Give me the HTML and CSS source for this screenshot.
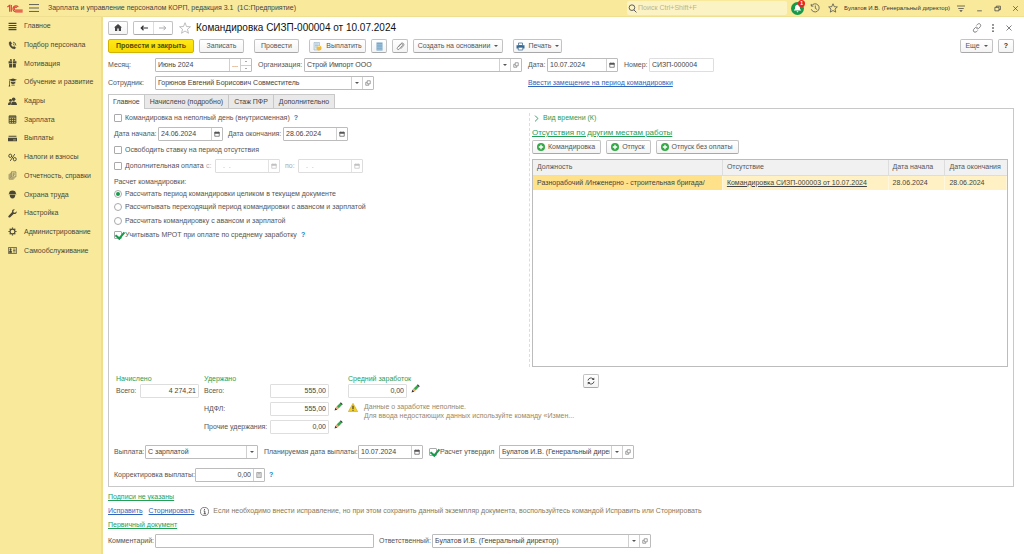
FILE: index.html
```
<!DOCTYPE html>
<html lang="ru">
<head>
<meta charset="utf-8">
<title>Командировка СИЗП-000004 от 10.07.2024</title>
<link rel="stylesheet" href="styles.css">
</head>
<body>
<svg class="sprite" aria-hidden="true">
  <symbol id="calendar" viewBox="0 0 12 12"><path d="M1.5 2.5h9v8h-9z" fill="none" stroke="#555" stroke-width="1.4"/><path d="M1 2h10v3.5H1zM3 .8h1.4V3H3zM7.6.8H9V3H7.6z" fill="#555"/></symbol>
  <symbol id="open" viewBox="0 0 12 12"><path d="M4.5 1.5h6v6h-6zM4 4.500H1.500v6h6V8" fill="none" stroke="#666" stroke-width="1.2"/></symbol>
  <symbol id="plus" viewBox="0 0 12 12"><circle cx="6" cy="6" r="6" fill="#35a847"/><path d="M6 2.700v6.600M2.700 6h6.600" stroke="#fff" stroke-width="2"/></symbol>
  <symbol id="pencil" viewBox="0 0 16 16"><path d="M1 15l1.500-5 3.500 3.500z" fill="#333"/><path d="M2.500 10L5 7.500 8.500 11 6 13.500z" fill="#f0a265"/><path d="M5 7.500L10.500 2 14 5.500 8.500 11z" fill="#35a84b"/><path d="M10.500 2L12 .5 15.500 4 14 5.500z" fill="#333"/></symbol>
  <symbol id="calc" viewBox="0 0 12 12"><path d="M1.500 1h9v10h-9z" fill="none" stroke="#777" stroke-width="1.200"/><path d="M3 3.500h6M3 6h1.500M5.300 6h1.500M7.600 6H9M3 8.500h1.500M5.300 8.500h1.500M7.600 8.500H9" stroke="#777" stroke-width="1.400"/></symbol>
</svg>

<header class="topbar">
  <svg class="logo" viewBox="0 0 48 27" fill="none" stroke="#e0403a" stroke-width="3.500"><path d="M1 9l7-5v19M13 23V3"/><path d="M34 9a9 9 0 1 0-8 14.500h21"/><path d="M29.500 11a4.500 4.500 0 1 0-3.500 7.500h21"/></svg>
  <button class="plain burger" aria-label="Меню"><svg viewBox="0 0 16 16" stroke="#555" stroke-width="1.500"><path d="M0 2.500h16M0 8h16M0 13.500h16"/></svg></button>
  <span class="app-title">Зарплата и управление персоналом КОРП, редакция 3.1&nbsp; (1С:Предприятие)</span>
  <label class="search">
    <svg viewBox="0 0 16 16" fill="none" stroke="#444" stroke-width="1.500"><circle cx="7" cy="6.500" r="5"/><path d="M10.500 10.500L15 15"/></svg>
    <input type="search" aria-label="Поиск" placeholder="Поиск Ctrl+Shift+F">
  </label>
  <button class="plain bell" aria-label="Оповещения"><svg viewBox="0 0 24 24"><circle cx="12" cy="12" r="12" fill="#159a4b"/><path d="M12 5c-3.500 0-4.500 3-4.500 6 0 2-1 3-2.500 4.500h14C17.500 14 16.500 13 16.500 11c0-3-1-6-4.500-6zM10 17h4l-2 2.500z" fill="#fff"/></svg><span class="count">1</span></button>
  <button class="plain" aria-label="История"><svg viewBox="0 0 16 16" fill="none" stroke="#555" stroke-width="1.300"><path d="M2.500 4.500A6.500 6.500 0 1 1 2 10M2 1.500v3.500h3.500M8.500 4v4.500l3 2"/></svg></button>
  <button class="plain" aria-label="Избранное"><svg viewBox="0 0 16 16" fill="none" stroke="#555" stroke-width="1.300"><path d="M8 1.200l2 4.700 5 .4-3.800 3.300 1.200 5L8 12l-4.400 2.600 1.200-5L1 6.300l5-.4z"/></svg></button>
  <span class="user">Булатов И.В. (Генеральный директор)</span>
  <button class="plain tune" aria-label="Настройки"><svg viewBox="0 0 16 16" stroke="#444" stroke-width="1.500"><path d="M0 3h16M2.500 8h11"/><path d="M4.500 11.500h7l-3.500 3.500z" fill="#444" stroke="none"/></svg></button>
  <button class="plain win" aria-label="Свернуть"><svg viewBox="0 0 12 12" stroke="#444" stroke-width="1.300"><path d="M2 10h8"/></svg></button>
  <button class="plain win" aria-label="Развернуть"><svg viewBox="0 0 12 12" fill="none" stroke="#444" stroke-width="1.300"><path d="M1.500 4h7v6h-7zM4 4V2h7v6H8.500"/></svg></button>
  <button class="plain win" aria-label="Закрыть"><svg viewBox="0 0 12 12" stroke="#444" stroke-width="1.200"><path d="M2 2l8 8M10 2l-8 8"/></svg></button>
</header>

<div class="shell">
<nav class="side">
 <div class="menu">
  <a href="#"><svg viewBox="0 0 16 16" stroke="#4b4737" stroke-width="2"><path d="M1 2.500h14M1 6.200h14M1 9.900h14M1 13.600h14"/></svg>Главное</a>
  <a href="#"><svg viewBox="0 0 16 16" fill="none" stroke="#4b4737" stroke-width="1.500"><path d="M2 2c-1 6 4 12 10 12l2-2-3-2.500-2 1C7 9.500 5.500 7.500 5.500 6L7 4.500 4.500 1z" fill="#4b4737" stroke-width=".5"/><path d="M9 5a3 3 0 0 1 2 3M9 2a6 6 0 0 1 5 6"/></svg>Подбор персонала</a>
  <a href="#"><svg viewBox="0 0 16 16" fill="#4b4737"><path d="M1 4h6.300v4H1zM8.700 4H15v4H8.700zM2 9h5.300v6H2zM8.700 9H14v6H8.700zM4 0l3 1v2H3zM12 0L9 1v2h4z"/></svg>Мотивация</a>
  <a href="#"><svg viewBox="0 0 16 16" fill="#4b4737"><path d="M1 3l8-2 7 2-7 3zM5 6l4 1.500L13 6v3.500L9 11 5 9.500zM2 4.500h1.300V12l.7 3H1l1-3zM6 12h6v1.500H6z"/></svg>Обучение и развитие</a>
  <a href="#"><svg viewBox="0 0 16 16" fill="#4b4737"><circle cx="10" cy="4" r="3.200"/><circle cx="4.500" cy="6" r="2.500"/><path d="M5.500 14c0-4 1.500-6 4.500-6s6 2 6 6zM0 14c0-3 1-5 4.500-5L5.500 10l-1 4z"/></svg>Кадры</a>
  <a href="#"><svg viewBox="0 0 16 16" fill="none" stroke="#4b4737" stroke-width="1.600"><path d="M2 1.500h12v13H2zM2 5h12M2 8.200h12M2 11.400h12M6 5v9.500M10 5v9.500M2 3h12"/></svg>Зарплата</a>
  <a href="#"><svg viewBox="0 0 16 16" fill="#4b4737"><path d="M1 3h14v2H1zM0 6.500h16V13H0z"/><path d="M9 10.500h5" stroke="#f9ea9b"/></svg>Выплаты</a>
  <a href="#"><svg viewBox="0 0 16 16" fill="none" stroke="#4b4737" stroke-width="1.700"><ellipse cx="4" cy="5" rx="2.600" ry="3"/><ellipse cx="12" cy="11" rx="2.600" ry="3"/><path d="M12 2L4 14"/></svg>Налоги и взносы</a>
  <a href="#"><svg viewBox="0 0 16 16" fill="none" stroke="#6b664f" stroke-width="1.200"><path d="M6 1.500h8v9H6zM4 3.500v9h8M2 5.500v9h8M8 4h4M8 6h4M8 8h3"/></svg>Отчетность, справки</a>
  <a href="#"><svg viewBox="0 0 16 16" fill="#4b4737"><path d="M2 6c0-3 2-5 6-5s6 2 6 5l1.500 1.500H.5zM3 8.500h10c0 4-2 6.500-5 6.500s-5-2.500-5-6.500z"/></svg>Охрана труда</a>
  <a href="#"><svg viewBox="0 0 16 16" fill="#4b4737"><path d="M15.500 4l-3 2.500L10 6l-.5-2.500L12 .8C9 0 6.500 2.500 7.300 5.500L.8 12.300c-1 1.500 1 3.700 2.700 2.700L10 8.800c3 .8 6-1.500 5.500-4.800z"/></svg>Настройка</a>
  <a href="#"><svg viewBox="0 0 16 16" fill="none" stroke="#4b4737"><circle cx="8" cy="8" r="4.300" stroke-width="2"/><path d="M8 .8v2.500M8 12.700v2.500M.8 8h2.500M12.700 8h2.500M3 3l1.600 1.600M11.400 11.400L13 13M13 3l-1.600 1.600M4.600 11.400L3 13" stroke-width="2.200"/></svg>Администрирование</a>
  <a href="#"><svg viewBox="0 0 16 16" fill="none" stroke="#4b4737" stroke-width="1.300"><path d="M.7 2.700h14.600v10.600H.7z"/><path d="M2.500 11.500c0-3 1-3.500 2-3.500s2 .5 2 3.500zM3.500 5h2v2h-2z" fill="#4b4737"/><path d="M9 5.500h4.500M9 8h4.500M9 10.500h4.500"/></svg>Самообслуживание</a>
 </div>
</nav>

<main class="doc">
  <div class="head">
    <button class="btn home" aria-label="Начальная страница"><svg viewBox="0 0 16 14" fill="#444"><path d="M8 0l8 7h-2v7H9.500V9h-3v5H2V7H0z"/></svg></button>
    <div class="nav-pair"><button aria-label="Назад"><svg viewBox="0 0 16 12" fill="none" stroke="#333" stroke-width="2.400"><path d="M16 6H3M7 1.500L2.500 6 7 10.500"/></svg></button><button aria-label="Вперед"><svg viewBox="0 0 16 12" fill="none" stroke="#aaa" stroke-width="2"><path d="M0 6h13M9 1.500L13.500 6 9 10.500"/></svg></button></div>
    <button class="plain fav" aria-label="В избранное"><svg viewBox="0 0 16 16" fill="none" stroke="#aaa"><path d="M8 1l2 5 5.300.3-4 3.400 1.300 5.300L8 12l-4.600 3 1.300-5.300-4-3.400L6 6z"/></svg></button>
    <h1>Командировка СИЗП-000004 от 10.07.2024</h1>
    <div class="head-tools">
      <button class="plain" aria-label="Ссылка"><svg viewBox="0 0 16 16" fill="none" stroke="#777" stroke-width="1.500"><path d="M7 4l2-2c3-2.500 6 .5 4.500 3.500L11 8.500c-1 1-3 1-4 0M9 12l-2 2c-3 2-6-.5-4.500-3.500L5 7.500c1-1 3-1 4 0"/></svg></button>
      <button class="plain" aria-label="Дополнительно"><svg viewBox="0 0 16 16" fill="#666"><circle cx="8" cy="3" r="1.500"/><circle cx="8" cy="8" r="1.500"/><circle cx="8" cy="13" r="1.500"/></svg></button>
      <button class="plain" aria-label="Закрыть документ"><svg viewBox="0 0 16 16" stroke="#777" stroke-width="1.500"><path d="M4 4l8 8M12 4l-8 8"/></svg></button>
    </div>
  </div>

  <div class="toolbar">
    <button class="btn primary">Провести и закрыть</button>
    <button class="btn save">Записать</button>
    <button class="btn post">Провести</button>
    <button class="btn pay"><svg viewBox="0 0 18 18"><path d="M2 1h11v15H2z" fill="#dceaf4" stroke="#8aa5ba"/><path d="M4 4h7M4 7h7M4 10h4" stroke="#8aa5ba"/><circle cx="12" cy="12" r="5" fill="#efb93d"/><path d="M9 9h5" stroke="#fff4b0" stroke-width="1.500"/></svg>Выплатить</button>
    <button class="btn square" aria-label="Движения документа"><svg viewBox="0 0 18 18"><path d="M3 1h12v16H3z" fill="#6fa0c4"/><path d="M3 4.500h12M3 8h12M3 11.500h12M3 14.500h12" stroke="#d5e5f0"/></svg></button>
    <button class="btn square" aria-label="Присоединенные файлы"><svg viewBox="0 0 16 16" fill="none" stroke="#777" stroke-width="1.400"><path d="M4 9l5-5.500c2-1.500 4 .5 2.500 2.500l-6 7c-2 1.500-4.500-.5-3-3l6-7c3-3 7 0 5 3.500L8.500 12"/></svg></button>
    <button class="btn create">Создать на основании<i class="caret"></i></button>
    <button class="btn print"><svg viewBox="0 0 18 16"><path d="M5 1h8v5H5z" fill="#fff" stroke="#396a90" stroke-width="1.500"/><path d="M1 5.500h16V12H1z" fill="#396a90"/><path d="M4.500 9.500h9V15h-9z" fill="#fff" stroke="#396a90" stroke-width="1.500"/></svg>Печать<i class="caret"></i></button>
    <button class="btn more">Еще<i class="caret"></i></button>
    <button class="btn square help">?</button>
  </div>

  <div class="row-main">
    <label for="month">Месяц:</label>
    <div class="field"><input id="month" value="Июнь 2024"><button aria-label="Выбрать месяц">...</button><span class="spin"><button aria-label="Следующий месяц"><i class="up"></i></button><button aria-label="Предыдущий месяц"><i class="caret"></i></button></span></div>
    <label for="org">Организация:</label>
    <div class="field"><span class="pick"><select id="org"><option>Строй Импорт ООО</option></select><i class="caret"></i></span><button aria-label="Открыть организацию"><svg><use href="#open"/></svg></button></div>
    <label for="date">Дата:</label>
    <div class="field"><input id="date" value="10.07.2024"><button aria-label="Календарь"><svg><use href="#calendar"/></svg></button></div>
    <label for="num">Номер:</label>
    <div class="field soft"><input id="num" value="СИЗП-000004"></div>
  </div>
  <div class="row-person">
    <label for="person">Сотрудник:</label>
    <div class="field"><span class="pick"><select id="person"><option>Горюнов Евгений Борисович Совместитель</option></select><i class="caret"></i></span><button aria-label="Открыть сотрудника"><svg><use href="#open"/></svg></button></div>
    <a class="blue" href="#">Ввести замещение на период командировки</a>
  </div>

  <div class="tabs" role="tablist">
    <button role="tab" aria-selected="true">Главное</button>
    <button role="tab" aria-selected="false">Начислено (подробно)</button>
    <button role="tab" aria-selected="false">Стаж ПФР</button>
    <button role="tab" aria-selected="false">Дополнительно</button>
  </div>

  <section class="panel">
    <div class="columns">
      <div class="left">
        <div class="line"><label class="tick"><input type="checkbox">Командировка на неполный день (внутрисменная)</label><a class="q" href="#">?</a></div>
        <div class="line dates">
          <label for="from">Дата начала:</label>
          <div class="field date"><input id="from" value="24.06.2024"><button aria-label="Календарь"><svg><use href="#calendar"/></svg></button></div>
          <label for="to">Дата окончания:</label>
          <div class="field date"><input id="to" value="28.06.2024"><button aria-label="Календарь"><svg><use href="#calendar"/></svg></button></div>
        </div>
        <div class="line"><label class="tick"><input type="checkbox">Освободить ставку на период отсутствия</label></div>
        <div class="line extra">
          <label class="tick"><input type="checkbox">Дополнительная оплата</label>
          <label class="dim" for="xfrom">с:</label>
          <div class="field date off"><input id="xfrom" value=" .  ." disabled><button disabled aria-label="Календарь"><svg><use href="#calendar"/></svg></button></div>
          <label class="dim" for="xto">по:</label>
          <div class="field date off"><input id="xto" value=" .  ." disabled><button disabled aria-label="Календарь"><svg><use href="#calendar"/></svg></button></div>
        </div>
        <div class="modes" role="radiogroup" aria-labelledby="modes-title">
          <span id="modes-title">Расчет командировки:</span>
          <label class="tick"><input type="radio" name="mode" checked>Рассчитать период командировки целиком в текущем документе</label>
          <label class="tick"><input type="radio" name="mode">Рассчитывать переходящий период командировки с авансом и зарплатой</label>
          <label class="tick"><input type="radio" name="mode">Рассчитать командировку с авансом и зарплатой</label>
          <div class="line short"><label class="tick"><input type="checkbox" checked>Учитывать МРОТ при оплате по среднему заработку</label><a class="q" href="#">?</a></div>
        </div>
      </div>
      <div class="right">
        <button class="plain expander"><svg viewBox="0 0 8 12" fill="none" stroke="#229c55" stroke-width="1.600"><path d="M1.500 1L6.500 6l-5 5"/></svg>Вид времени (К)</button>
        <a class="group" href="#">Отсутствия по другим местам работы</a>
        <div class="adders">
          <button class="btn"><svg><use href="#plus"/></svg>Командировка</button>
          <button class="btn"><svg><use href="#plus"/></svg>Отпуск</button>
          <button class="btn"><svg><use href="#plus"/></svg>Отпуск без оплаты</button>
        </div>
        <div class="grid-box">
          <table>
            <colgroup><col class="c1"><col class="c2"><col class="c3"><col class="c4"></colgroup>
            <thead><tr><th>Должность</th><th>Отсутствие</th><th>Дата начала</th><th>Дата окончания</th></tr></thead>
            <tbody><tr><td class="current">Разнорабочий /Инженерно - строительная бригада/</td><td><a href="#">Командировка СИЗП-000003 от 10.07.2024</a></td><td>28.06.2024</td><td>28.06.2024</td></tr></tbody>
          </table>
        </div>
      </div>
    </div>

    <div class="totals">
      <div class="sum accrued">
        <h2>Начислено</h2>
        <label for="acc">Всего:</label><div class="field soft num"><input id="acc" value="4 274,21"></div>
      </div>
      <div class="sum held">
        <h2>Удержано</h2>
        <label for="held">Всего:</label><div class="field soft num"><input id="held" value="555,00"></div><span></span>
        <label for="tax">НДФЛ:</label><div class="field soft num"><input id="tax" value="555,00"></div><button class="plain pen" aria-label="Изменить НДФЛ"><svg><use href="#pencil"/></svg></button>
        <label for="other">Прочие удержания:</label><div class="field soft num"><input id="other" value="0,00"></div><button class="plain pen" aria-label="Изменить удержания"><svg><use href="#pencil"/></svg></button>
      </div>
      <div class="average">
        <h2><label for="avg">Средний заработок</label></h2>
        <div class="avg-row"><div class="field soft num"><input id="avg" value="0,00"></div><button class="plain pen" aria-label="Изменить заработок"><svg><use href="#pencil"/></svg></button></div>
        <div class="warn"><svg viewBox="0 0 18 16"><path d="M9 .5L17.500 15.500H.5z" fill="#f4cf27" stroke="#caa20c"/><path d="M9 5v5.500M9 12v2" stroke="#333" stroke-width="2"/></svg><p>Данные о заработке неполные.<br>Для ввода недостающих данных используйте команду «Измен...</p></div>
      </div>
      <button class="btn refresh" aria-label="Обновить"><svg viewBox="0 0 16 16" fill="none" stroke="#444" stroke-width="1.800"><path d="M2 7a6 6 0 0 1 10.500-3M14 9a6 6 0 0 1-10.500 3"/><path d="M14.500 1v5h-5zM1.500 15v-5h5z" fill="#444" stroke="none"/></svg></button>
    </div>

    <div class="row-pay">
      <label for="pay">Выплата:</label>
      <div class="field"><span class="pick"><select id="pay"><option>С зарплатой</option></select><i class="caret"></i></span></div>
      <label for="plan">Планируемая дата выплаты:</label>
      <div class="field"><input id="plan" value="10.07.2024"><button aria-label="Календарь"><svg><use href="#calendar"/></svg></button></div>
      <label class="tick"><input type="checkbox" checked>Расчет утвердил</label>
      <div class="field"><span class="pick"><select aria-label="Расчет утвердил"><option>Булатов И.В. (Генеральный директор)</option></select><i class="caret"></i></span><button aria-label="Открыть"><svg><use href="#open"/></svg></button></div>
    </div>
    <div class="row-fix">
      <label for="fix">Корректировка выплаты:</label>
      <div class="field num"><input id="fix" value="0,00"><button aria-label="Калькулятор"><svg><use href="#calc"/></svg></button></div>
      <a class="q" href="#">?</a>
    </div>
  </section>

  <footer class="foot">
    <a class="green" href="#">Подписи не указаны</a>
    <div class="hint"><a class="blue" href="#">Исправить</a><a class="blue" href="#">Сторнировать</a><svg viewBox="0 0 16 16" fill="none" stroke="#444"><circle cx="8" cy="8" r="7.200" stroke-width="1.200"/><path d="M6.500 7H8.500v5M6.500 12h4M8 3.500v1.800" stroke-width="1.600"/></svg><span>Если необходимо внести исправление, но при этом сохранить данный экземпляр документа, воспользуйтесь командой Исправить или Сторнировать</span></div>
    <a class="green" href="#">Первичный документ</a>
    <div class="row-foot">
      <label for="comment">Комментарий:</label>
      <div class="field"><input id="comment"></div>
      <label for="resp">Ответственный:</label>
      <div class="field"><span class="pick"><select id="resp"><option>Булатов И.В. (Генеральный директор)</option></select><i class="caret"></i></span><button aria-label="Открыть ответственного"><svg><use href="#open"/></svg></button></div>
    </div>
  </footer>
</main>
</div>
</body>
</html>
```

FILE: styles.css
```
* { box-sizing: border-box; }
body {
  margin: 0;
  min-height: 100vh;
  display: flex;
  flex-direction: column;
  font: 7px/10px "Liberation Sans", Arial, sans-serif;
  color: #555;
  background: #fff;
}
.sprite { display: none; }
button, input, select { font: inherit; color: inherit; margin: 0; }
button { padding: 0; cursor: pointer; }
svg { flex: none; display: block; }
h1, h2, p { margin: 0; font-weight: normal; }
label, a, h1, h2, span { white-space: nowrap; }
.plain { border: 0; background: none; display: flex; align-items: center; justify-content: center; }

/* top bar */
.topbar {
  display: flex;
  align-items: center;
  height: 17px;
  padding: 0 0 0 7px;
  background: #f9ea9b;
  border-bottom: 1px solid #eedf91;
}
.logo { width: 16px; height: 9px; }
.burger { margin-left: 6px; }
.burger svg { width: 9px; height: 8px; }
.app-title { margin-left: 10px; color: #444; }
.search {
  display: flex;
  align-items: center;
  width: 160px;
  height: 14px;
  margin-left: auto;
  padding-left: 1px;
  background: #fcf3c4;
  border-radius: 2px;
}
.search svg { width: 9px; height: 9px; }
.search input { flex: 1; min-width: 0; border: 0; background: none; padding: 0 1px; outline: 0; }
.search input::placeholder { color: #bdb38a; opacity: 1; }
.topbar .plain svg { width: 10px; height: 10px; }
.topbar .plain { width: 18px; height: 14px; }
.topbar .burger { width: 9px; }
.topbar .bell { position: relative; margin-left: 1px; }
.topbar .bell svg { width: 13px; height: 13px; }
.count {
  position: absolute;
  top: -1px;
  right: 1px;
  width: 7px;
  height: 7px;
  border-radius: 50%;
  background: #ee2020;
  color: #fff;
  font: bold 5px/7px "Liberation Sans", sans-serif;
  text-align: center;
}
.user { font-size: 6px; color: #333; margin: 0 2px; }
.topbar .tune svg { width: 8px; height: 9px; }
.topbar .win svg { width: 7px; height: 7px; }

/* side menu */
.shell { flex: 1; display: flex; }
.side { flex: none; width: 103px; padding-left: 8px; background: #f9ea9b; border-right: 2px solid #efdf8d; }
.menu { display: grid; grid-auto-rows: 1fr; height: 243px; }
.side a {
  display: flex;
  align-items: center;
  gap: 7px;
  color: #4b4737;
  text-decoration: none;
}
.side svg { width: 9px; height: 9px; }

/* document */
.doc { flex: 1; min-width: 0; display: flex; flex-direction: column; padding: 3px 10px 6px 5px; }
.btn {
  display: inline-flex;
  align-items: center;
  justify-content: center;
  height: 14px;
  padding: 0 6px;
  border: 1px solid #c3c3c3;
  border-bottom-color: #a8a8a8;
  border-radius: 2px;
  background: linear-gradient(#fff, #f4f4f4);
  white-space: nowrap;
}
.btn svg { width: 9px; height: 9px; margin-right: 4px; }
.caret {
  display: inline-block;
  border: 2px solid transparent;
  border-top-color: #555;
  border-bottom: 0;
}
.btn .caret { margin-left: 4px; }
.head { display: flex; align-items: center; height: 15px; }
.home { width: 20px; }
.btn.home svg { width: 8px; height: 7px; margin: 0; }
.nav-pair { display: flex; margin-left: 5px; border: 1px solid #c3c3c3; border-bottom-color: #a8a8a8; border-radius: 2px; }
.nav-pair button { display: flex; align-items: center; justify-content: center; width: 19px; height: 12px; border: 0; background: none; }
.nav-pair button + button { border-left: 1px solid #ddd; }
.nav-pair svg { width: 8px; height: 6px; }
.fav { margin-left: 6px; }
.fav svg { width: 12px; height: 12px; }
h1 { margin-left: 5px; font-size: 10px; line-height: 15px; color: #111; }
.head-tools { display: flex; gap: 6px; margin-left: auto; }
.head-tools svg { width: 10px; height: 10px; }
.toolbar { display: flex; margin-top: 4px; gap: 5px; }
.primary { width: 86px; font-weight: bold; color: #554b00; background: linear-gradient(#ffe817, #f7d900); border-color: #d1b400; }
.save { width: 45px; }
.post { width: 45px; margin-left: 5px; }
.pay { width: 57px; margin-left: 5px; }
.btn.square { width: 16px; padding: 0; }
.btn.square svg { margin: 0; }
.create { width: 90px; }
.print { width: 49px; margin-left: 5px; }
.more { width: 33px; margin-left: auto; }
.help { font-weight: bold; color: #333; }

/* fields */
.field {
  display: flex;
  height: 14px;
  min-width: 0;
  border: 1px solid #bcbcbc;
  border-radius: 1px;
  background: #fff;
  color: #444;
}
.field input, .field select {
  flex: 1;
  width: 100%;
  min-width: 0;
  padding: 0 2px;
  border: 0;
  outline: 0;
  background: none;
  appearance: none;
}
.field button {
  display: flex;
  align-items: center;
  justify-content: center;
  flex: none;
  width: 11px;
  border: 0;
  border-left: 1px solid #d0d0d0;
  background: none;
}
.field button svg { width: 6px; height: 6px; }
.pick { flex: 1; min-width: 0; display: grid; grid-template-columns: minmax(0, 1fr) 11px; }
.pick select { grid-area: 1 / 1 / 2 / 3; padding-right: 12px; }
.pick .caret { grid-area: 1 / 2; place-self: center; pointer-events: none; }
.pick::after { content: ""; grid-area: 1 / 2; border-left: 1px solid #d0d0d0; pointer-events: none; }
.spin { display: flex; flex-direction: column; width: 11px; border-left: 1px solid #d0d0d0; }
.field .spin button { flex: 1; width: 100%; border: 0; }
.field .spin button + button { border-top: 1px solid #d0d0d0; }
.spin .caret { border-width: 1px 1px 0; }
.up { border: 1px solid transparent; border-bottom-color: #555; border-top: 0; }
.soft { border-color: #dedede; }
.num input { text-align: right; }
.row-main, .row-person, .row-pay, .row-fix, .row-foot { display: grid; align-items: center; justify-content: start; }
.row-main { grid-template-columns: 47px 97px 52px 218px 25px 71px 31px 65px; margin-top: 5px; }
.row-main .field + label { margin-left: 6px; }
.row-person { grid-template-columns: 47px 219px auto; margin-top: 4px; }
.row-person a { margin-left: 154px; }
.blue { color: #3165bd; }
.green { color: #259e57; }

/* tabs */
.tabs { display: flex; margin-top: 4px; height: 15px; }
.tabs button { padding: 0 5px; border: 1px solid #c8c8c8; border-left: 0; background: #e9e9e9; color: #444; white-space: nowrap; }
.tabs button:first-child { padding: 0 4px; border-left: 1px solid #c8c8c8; }
.tabs button[aria-selected="true"] { background: #fff; border-bottom: 0; position: relative; z-index: 1; }
.panel {
  flex: 1;
  display: flex;
  flex-direction: column;
  margin-top: -1px;
  padding: 4px 5px;
  border: 1px solid #c8c8c8;
}
.columns { flex: 1; display: grid; grid-template-columns: 415fr 479fr; }
.line { display: flex; align-items: center; height: 16px; }
.line.short { height: 14px; }
.columns .left > .line:first-child { height: 10px; margin-bottom: 3px; }
.tick { display: flex; align-items: center; gap: 3px; }
.tick input {
  appearance: none;
  position: relative;
  flex: none;
  width: 8px;
  height: 8px;
  border: 1px solid #aaa;
  border-radius: 1px;
  background: #fff;
  display: grid;
  place-items: center;
}
.tick input[type="radio"] { border-radius: 50%; }
.tick input[type="radio"]:checked::after { content: ""; width: 4px; height: 4px; border-radius: 50%; background: #169a4c; }
.tick input[type="checkbox"]:checked::after {
  content: "";
  position: absolute;
  top: -2px;
  left: 2px;
  width: 4px;
  height: 7px;
  border: solid #169a4c;
  border-width: 0 2px 2px 0;
  rotate: 40deg;
}
.q { margin-left: 4px; color: #0a8ad2; font-weight: bold; text-decoration: none; }
.dates, .extra { display: grid; grid-template-columns: 44px 65px 60px 65px; }
.dates label:nth-of-type(2) { padding-left: 5px; }
.extra { grid-template-columns: 92px 9px 65px 18px 65px; }
.extra .dim:nth-of-type(3) { padding-left: 5px; }
.dim { color: #aaa; }
.off { border-color: #ddd; color: #aaa; }
.off button, .off svg { opacity: .6; }
.off input { white-space: pre; padding-left: 5px; }
.modes { display: flex; flex-direction: column; padding-top: 3px; }
.modes > .tick { height: 14px; }
.modes > span { line-height: 10px; }
.modes > span + .tick { height: 13px; }

.right { display: flex; flex-direction: column; align-items: flex-start; padding-left: 2px; border-left: 1px dashed #ddd; min-width: 0; }
.expander { gap: 4px; margin-left: 2px; color: #259e57; }
.expander svg { width: 5px; height: 7px; }
.group { margin-top: 4px; font-size: 8px; line-height: 12px; color: #259e57; }
.adders { display: flex; gap: 5px; margin-top: 1px; }
.adders .btn { padding: 0 5px 0 4px; }
.adders .btn svg { width: 8px; height: 8px; margin-right: 3px; }
.grid-box { flex: 1; align-self: stretch; margin-top: 5px; border: 1px solid #bcbcbc; }
table { width: 100%; border-collapse: collapse; table-layout: fixed; }
.c1 { width: 40%; }
.c2 { width: 35%; }
.c3 { width: 12%; }
.c4 { width: 13%; }
th, td { height: 15px; padding: 0 4px; text-align: left; font-weight: normal; white-space: nowrap; overflow: hidden; }
th { background: #f1f1f1; border-right: 1px solid #ddd; border-bottom: 1px solid #ddd; }
th:last-child { border-right: 0; }
td { background: #fff1c3; color: #444; border-right: 1px solid #fff7dd; }
td a { color: inherit; }
.current { background: #ffe18a; }

/* totals */
.totals { display: grid; grid-template-columns: 88px 144px 235px auto; justify-content: start; align-items: start; padding: 7px 0 0 2px; }
h2 { font-size: 7px; line-height: 10px; color: #259e57; }
.sum { display: grid; align-items: center; row-gap: 4px; }
.sum h2 { grid-column: 1 / -1; margin-bottom: -4px; }
.accrued { grid-template-columns: 24px 59px; }
.held { grid-template-columns: 66px 59px 19px; }
.pen { align-self: start; }
.pen svg { width: 9px; height: 9px; }
.avg-row { display: flex; align-items: center; gap: 4px; }
.avg-row .field { width: 59px; }
.warn { display: flex; gap: 6px; margin-top: 4px; }
.warn svg { width: 10px; height: 9px; margin-top: 1px; }
.warn p { line-height: 9px; color: #96896a; }
.refresh { width: 16px; padding: 0; }
.btn.refresh svg { width: 8px; height: 8px; margin: 0; }
.row-pay { grid-template-columns: 31px 113px 100px 65px 76px 135px; margin-top: 11px; }
.row-pay .field + label { margin-left: 6px; }
.row-fix { grid-template-columns: 81px 70px auto; margin-top: 9px; }

/* footer */
.foot { display: flex; flex-direction: column; align-items: flex-start; padding-top: 5px; }
.hint { display: flex; align-items: center; height: 18px; color: #85795c; }
.hint a + a { margin-left: 6px; }
.hint svg { width: 9px; height: 9px; margin: 0 4px 0 6px; }
.row-foot { grid-template-columns: 47px 219px 58px 219px; margin-top: 4px; }
.row-foot .field + label { margin-left: 5px; }
```
